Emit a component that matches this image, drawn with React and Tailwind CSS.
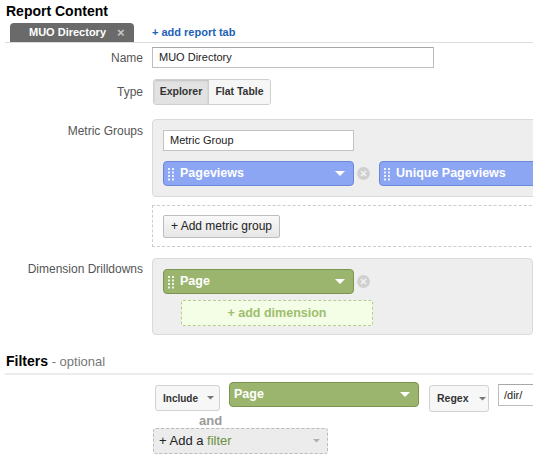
import React from 'react';

const font = "font-['Liberation_Sans',Arial,sans-serif]";

// two columns of little dots used as a drag handle on the chips
const Grip = ({ color = '#ffffff' }) => (
  <svg width="6" height="14" viewBox="0 0 6 14" className="shrink-0">
    {[1, 4.5, 8, 11.5].map((y) => (
      <g key={y} fill={color} opacity="0.85">
        <rect x="0" y={y} width="2" height="2" />
        <rect x="4" y={y} width="2" height="2" />
      </g>
    ))}
  </svg>
);

const Caret = ({ color = '#ffffff', w = 10 }) => (
  <svg width={w} height="6" viewBox="0 0 10 6" className="shrink-0">
    <polygon points="0,0 10,0 5,5" fill={color} />
  </svg>
);

const RemoveDot = () => (
  <div className="w-[13px] h-[13px] rounded-full bg-[#d0d0d0] flex items-center justify-center shrink-0">
    <svg width="7" height="7" viewBox="0 0 7 7">
      <line x1="1" y1="1" x2="6" y2="6" stroke="#f2f2f2" strokeWidth="1.6" />
      <line x1="6" y1="1" x2="1" y2="6" stroke="#f2f2f2" strokeWidth="1.6" />
    </svg>
  </div>
);

const Chip = ({ label, tone, width, caret = true, grip = true }) => {
  const tones = {
    blue: 'bg-[#8ca6f3] border-[#6c86d8]',
    green: 'bg-[#9bb56e] border-[#7b9551]',
  };
  return (
    <div
      className={`h-[25px] ${width} shrink-0 rounded-[4px] border ${tones[tone]} flex items-center pl-[4px] pr-[8px]`}
    >
      {grip && <Grip />}
      <span
        className={`${grip ? 'ml-[6px]' : 'ml-0'} text-[12.5px] font-bold text-white leading-none flex-1 whitespace-nowrap`}
      >
        {label}
      </span>
      {caret && <Caret />}
    </div>
  );
};

const Label = ({ children, className = '' }) => (
  <div className={`w-[143px] shrink-0 text-right text-[12px] text-[#555] leading-[16px] ${className}`}>
    {children}
  </div>
);

export default function App() {
  return (
    <div className={`w-[533px] h-[460px] overflow-hidden bg-white text-[#222] ${font}`}>
      {/* Heading */}
      <h1 className="pl-[6px] pt-[3px] text-[14px] font-bold leading-[17px] text-black">Report Content</h1>

      {/* Tabs */}
      <div className="mt-[4px] ml-[5px] h-[19px] flex items-end border-b border-[#dcdcdc]">
        <div className="ml-[5px] w-[124px] h-[19px] rounded-t-[4px] bg-[#6a6a6a] flex items-center pl-[19px]">
          <span className="text-[11px] font-bold text-white leading-none">MUO Directory</span>
          <span className="ml-[11px] text-[13px] font-bold text-[#c8c8c8] leading-none">×</span>
        </div>
        <a className="ml-[18px] mb-[4px] text-[11px] font-bold text-[#1c62b9] leading-none">+ add report tab</a>
      </div>

      {/* Name */}
      <div className="mt-[4px] flex items-center">
        <Label>Name</Label>
        <div className="ml-[9px] w-[282px] h-[21px] border border-[#bdbdbd] border-t-[#a8a8a8] flex items-center pl-[6px] text-[11px] text-[#222]">
          MUO Directory
        </div>
      </div>

      {/* Type */}
      <div className="mt-[11px] flex items-center">
        <Label>Type</Label>
        <div className="ml-[10px] h-[26px] flex rounded-[3px] border border-[#cfcfcf] overflow-hidden text-[10.5px] font-bold text-[#333]">
          <div className="w-[55px] bg-[#e2e2e2] flex items-center justify-center border-r border-[#cfcfcf] shadow-[inset_0_1px_2px_rgba(0,0,0,0.15)]">
            Explorer
          </div>
          <div className="w-[61px] bg-[#f6f6f6] flex items-center justify-center">Flat Table</div>
        </div>
      </div>

      {/* Metric Groups */}
      <div className="mt-[14px] flex items-start">
        <Label className="pt-[4px]">Metric Groups</Label>
        <div className="ml-[9px] flex-1 min-w-0">
          <div className="w-[420px] rounded-[4px] border border-[#dadada] bg-[#eeeeee] pl-[10px] pt-[10px] pb-[10px]">
            <div className="w-[191px] h-[21px] border border-[#c4c4c4] bg-white flex items-center pl-[6px] text-[11px] text-[#222]">
              Metric Group
            </div>
            <div className="mt-[10px] flex items-center">
              <Chip label="Pageviews" tone="blue" width="w-[191px]" />
              <div className="ml-[3px] mr-[9px]"><RemoveDot /></div>
              <Chip label="Unique Pageviews" tone="blue" width="w-[191px]" caret={false} />
            </div>
          </div>

          <div className="mt-[8px] w-[420px] h-[42px] border border-dashed border-[#cccccc] flex items-center pl-[10px]">
            <button className="h-[23px] w-[117px] rounded-[2px] border border-[#bdbdbd] bg-gradient-to-b from-[#f9f9f9] to-[#e6e6e6] text-[12px] text-[#222] leading-none">
              + Add metric group
            </button>
          </div>
        </div>
      </div>

      {/* Dimension Drilldowns */}
      <div className="mt-[11px] flex items-start">
        <Label className="pt-[3px]">Dimension Drilldowns</Label>
        <div className="ml-[9px] w-[420px] rounded-[4px] border border-[#dadada] bg-[#eeeeee] pl-[10px] pt-[10px] pb-[8px]">
          <div className="flex items-center">
            <Chip label="Page" tone="green" width="w-[191px]" />
            <div className="ml-[3px]"><RemoveDot /></div>
          </div>
          <div className="mt-[6px] ml-[18px] w-[192px] h-[26px] rounded-[2px] border border-dashed border-[#b5ce8c] bg-[#f4fde6] flex items-center justify-center text-[12.5px] font-bold text-[#9fbd6f] leading-none">
            + add dimension
          </div>
        </div>
      </div>

      {/* Filters */}
      <div className="mt-[17px] ml-[5px] pl-[1px] pb-[3px] border-b-2 border-[#ececec] leading-[17px]">
        <span className="text-[14px] font-bold text-black">Filters</span>
        <span className="text-[13px] text-[#777]"> - optional</span>
      </div>

      <div className="mt-[7px] pl-[155px] flex items-start">
        <div className="shrink-0 mt-[3px] h-[26px] w-[65px] rounded-[3px] border border-[#d2d2d2] bg-[#f7f7f7] flex items-center pl-[7px] gap-[9px] text-[10px] font-bold text-[#333]">
          Include
          <Caret color="#777" w={7} />
        </div>
        <div className="shrink-0 ml-[9px]">
          <Chip label="Page" tone="green" width="w-[190px]" grip={false} />
        </div>
        <div className="shrink-0 ml-[10px] mt-[3px] h-[27px] w-[60px] rounded-[3px] border border-[#d2d2d2] bg-[#f7f7f7] flex items-center pl-[7px] gap-[10px] text-[10.5px] font-bold text-[#333]">
          Regex
          <Caret color="#777" w={7} />
        </div>
        <div className="shrink-0 ml-[9px] mt-[2px] h-[22px] w-[60px] border border-[#bdbdbd] border-t-[#a8a8a8] pl-[5px] flex items-center text-[11px] text-[#222]">
          /dir/
        </div>
      </div>

      <div className="pl-[199px] mt-[2px] text-[13px] font-bold text-[#9a9a9a] leading-[14px]">and</div>

      <div className="mt-[0px] ml-[153px] w-[175px] h-[26px] rounded-[3px] border border-dashed border-[#bbbbbb] bg-[#ececec] flex items-center pl-[5px] pr-[7px] text-[13px] text-[#222]">
        <span className="flex-1">
          + Add a <span className="text-[#6e8e42]">filter</span>
        </span>
        <Caret color="#b0b0b0" w={7} />
      </div>
    </div>
  );
}
